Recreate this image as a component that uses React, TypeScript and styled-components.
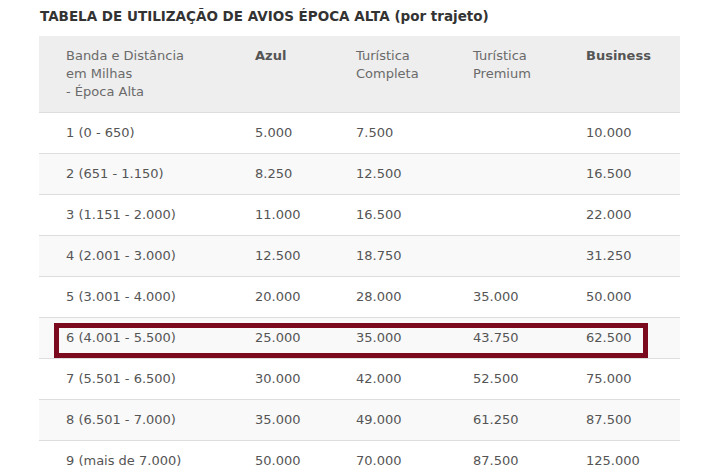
import styled, { createGlobalStyle } from 'styled-components';

const GlobalStyle = createGlobalStyle`
  body {
    margin: 0;
    background: #ffffff;
    font-family: 'DejaVu Sans', Verdana, sans-serif;
  }
`;

const Page = styled.div`
  padding: 8px 35px 0 39px;
  width: 641px;
`;

const Title = styled.h3`
  margin: 0 0 12px 1px;
  font-size: 13.5px;
  font-weight: bold;
  color: #333333;
  line-height: 16px;
`;

const Table = styled.table`
  width: 641px;
  border-collapse: collapse;
  table-layout: fixed;
  font-size: 13px;
  color: #555555;
`;

const HeadRow = styled.tr`
  background: #eeeeee;
  border-bottom: 1px solid #dddddd;
`;

const HeadCell = styled.th<{ $bold?: boolean }>`
  height: 76px;
  padding: 11px 0 0 27px;
  vertical-align: top;
  text-align: left;
  font-weight: ${(p) => (p.$bold ? 'bold' : 'normal')};
  color: ${(p) => (p.$bold ? '#555555' : '#6a6a6a')};
  line-height: 18px;
  box-sizing: border-box;
`;

const Row = styled.tr<{ $striped: boolean }>`
  background: ${(p) => (p.$striped ? '#f9f9f9' : '#ffffff')};
  border-bottom: 1px solid #dddddd;
  &:last-child {
    border-bottom: none;
  }
`;

const Cell = styled.td`
  height: 41px;
  padding: 1px 0 0 27px;
  line-height: 16px;
  box-sizing: border-box;
  white-space: nowrap;
  position: relative;
`;

const Highlight = styled.span`
  position: absolute;
  left: 15px;
  top: 5px;
  width: 594px;
  height: 35px;
  border: 5px solid #7b0a1e;
  box-sizing: border-box;
  pointer-events: none;
`;

const rows: [string, string, string, string, string][] = [
  ['1 (0 - 650)', '5.000', '7.500', '', '10.000'],
  ['2 (651 - 1.150)', '8.250', '12.500', '', '16.500'],
  ['3 (1.151 - 2.000)', '11.000', '16.500', '', '22.000'],
  ['4 (2.001 - 3.000)', '12.500', '18.750', '', '31.250'],
  ['5 (3.001 - 4.000)', '20.000', '28.000', '35.000', '50.000'],
  ['6 (4.001 - 5.500)', '25.000', '35.000', '43.750', '62.500'],
  ['7 (5.501 - 6.500)', '30.000', '42.000', '52.500', '75.000'],
  ['8 (6.501 - 7.000)', '35.000', '49.000', '61.250', '87.500'],
  ['9 (mais de 7.000)', '50.000', '70.000', '87.500', '125.000'],
];

export default function App() {
  return (
    <>
      <GlobalStyle />
      <Page>
        <Title>TABELA DE UTILIZAÇÃO DE AVIOS ÉPOCA ALTA (por trajeto)</Title>
        <Table>
          <colgroup>
            <col style={{ width: 189 }} />
            <col style={{ width: 101 }} />
            <col style={{ width: 117 }} />
            <col style={{ width: 113 }} />
            <col style={{ width: 121 }} />
          </colgroup>
          <thead>
            <HeadRow>
              <HeadCell>
                Banda e Distância
                <br />
                em Milhas
                <br />- Época Alta
              </HeadCell>
              <HeadCell $bold>Azul</HeadCell>
              <HeadCell>
                Turística
                <br />
                Completa
              </HeadCell>
              <HeadCell>
                Turística
                <br />
                Premium
              </HeadCell>
              <HeadCell $bold>Business</HeadCell>
            </HeadRow>
          </thead>
          <tbody>
            {rows.map((r, i) => (
              <Row key={r[0]} $striped={i % 2 === 1}>
                {r.map((v, j) => (
                  <Cell key={j}>
                    {v}
                    {i === 5 && j === 0 && <Highlight />}
                  </Cell>
                ))}
              </Row>
            ))}
          </tbody>
        </Table>
      </Page>
    </>
  );
}
